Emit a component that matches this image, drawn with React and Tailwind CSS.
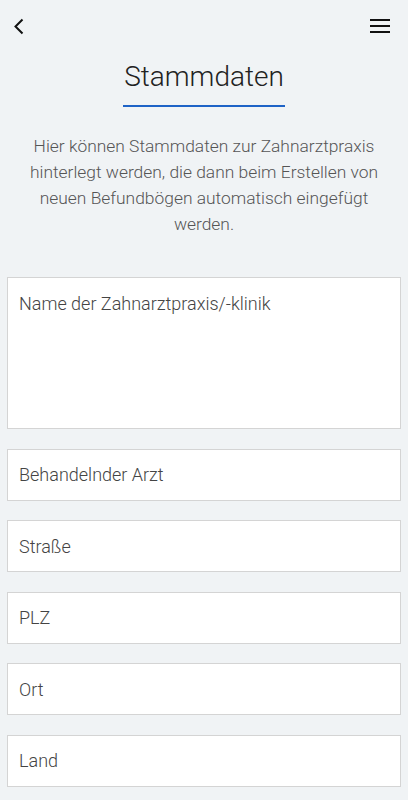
import { useState } from 'react'

const fields = ['Behandelnder Arzt', 'Straße', 'PLZ', 'Ort', 'Land']

export default function App() {
  const [values, setValues] = useState({})

  return (
    <div className="min-h-[800px] bg-[#f0f3f5] font-['Roboto',sans-serif]">
      <header className="flex items-center justify-between px-[12px] pt-[16px] h-[36px]">
        <button className="w-[14px] h-[18px] flex items-center justify-center">
          <svg width="12" height="17" viewBox="0 0 12 17" fill="none">
            <path d="M9.5 1.5 L2.5 8.5 L9.5 15.5" stroke="#111" strokeWidth="2" />
          </svg>
        </button>
        <button className="w-[20px] h-[14px] flex flex-col justify-between mr-[6px]">
          <span className="block h-[2px] w-[20px] bg-[#111]" />
          <span className="block h-[2px] w-[20px] bg-[#111]" />
          <span className="block h-[2px] w-[20px] bg-[#111]" />
        </button>
      </header>

      <div className="flex justify-center mt-[24px]">
        <h1 className="text-[28px] leading-[34px] font-light text-[#222] px-[1px] pb-[11px] border-b-2 border-[#1e63c6]">
          Stammdaten
        </h1>
      </div>

      <p className="mt-[26px] px-[20px] text-center text-[17.4px] leading-[26px] font-light text-[#555]">
        Hier können Stammdaten zur Zahnarztpraxis hinterlegt werden, die dann beim Erstellen von neuen Befundbögen automatisch eingefügt werden.
      </p>

      <div className="mt-[40px] px-[7px] flex flex-col gap-[19.5px] pb-[20px]">
        <textarea
          placeholder="Name der Zahnarztpraxis/-klinik"
          value={values.name || ''}
          onChange={(e) => setValues({ ...values, name: e.target.value })}
          className="h-[152px] w-full resize-none bg-white border border-[#d4d4d4] px-[11px] pt-[16px] text-[18px] leading-[20px] font-light text-[#333] placeholder:text-[#444] outline-none"
        />
        {fields.map((f) => (
          <input
            key={f}
            placeholder={f}
            value={values[f] || ''}
            onChange={(e) => setValues({ ...values, [f]: e.target.value })}
            className="h-[52px] w-full bg-white border border-[#d4d4d4] px-[11px] text-[18px] font-light text-[#333] placeholder:text-[#444] outline-none"
          />
        ))}
      </div>
    </div>
  )
}
